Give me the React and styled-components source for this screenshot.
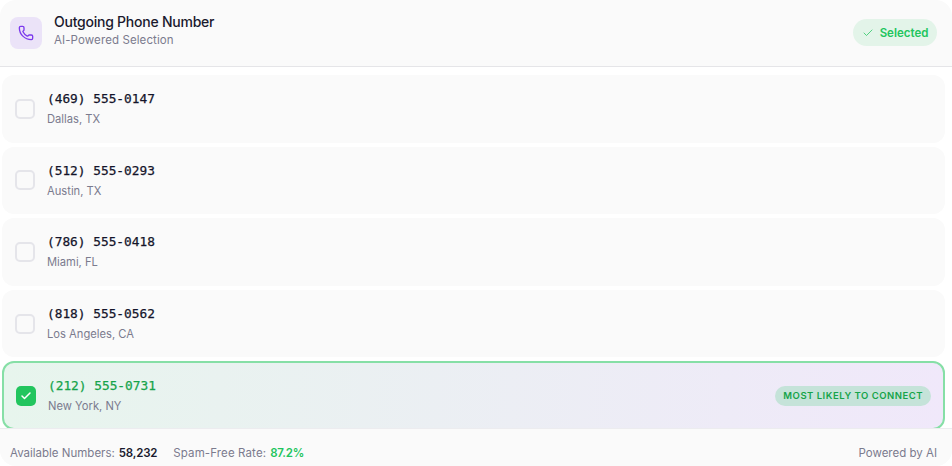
import React from "react";
import styled, { createGlobalStyle } from "styled-components";
import { Phone, Check } from "lucide-react";

const Global = createGlobalStyle`
  html, body { margin: 0; padding: 0; background: #ffffff; }
  * { box-sizing: border-box; }
`;
const Card = styled.div`
  width: 952px; height: 466px; display: flex; flex-direction: column; overflow: hidden;
  background: #fafafa; border-radius: 16px;
  font-family: "Inter", "Noto Sans", sans-serif; color: #1a1a2e;
`;
const Header = styled.header`
  flex: none; height: 67px; display: flex; align-items: center; justify-content: space-between;
  padding: 0 15px 0 10px; border-bottom: 1px solid #e5e5e8;
`;
const TitleGroup = styled.div`display: flex; align-items: center; gap: 12px;`;
const IconBox = styled.div`
  width: 32px; height: 32px; border-radius: 8px; background: #ebe3f8; color: #7c3aed;
  display: flex; align-items: center; justify-content: center;
`;
const Titles = styled.div`display: flex; flex-direction: column; gap: 3px; margin-bottom: 6px;`;
const Title = styled.div`font-size: 14px; font-weight: 500; line-height: 17px; letter-spacing: -0.24px;`;
const Subtitle = styled.div`font-size: 11.5px; line-height: 14px; color: #7b7b8e; letter-spacing: 0.1px;`;
const SelectedPill = styled.div`
  height: 27px; width: 84px; border-radius: 14px; background: #e3f4e9; color: #22c55e; margin-bottom: 1px;
  display: flex; align-items: center; justify-content: center; gap: 6px;
  font-size: 11.5px; font-weight: 600;
`;
const List = styled.div`
  flex: 1; min-height: 0; overflow: hidden; background: #fff; padding: 8px 7px 0 2px;
  display: flex; flex-direction: column; gap: 4px;
`;
const Row = styled.div`
  flex: none; height: ${p => (p.$selected ? "68.6px" : "67.6px")}; border-radius: 12px; display: flex; align-items: center;
  padding: 0 12px 0 ${p => (p.$selected ? "12px" : "13px")};
  background: ${p => (p.$selected ? "linear-gradient(90deg, #e7f5ed 0%, #f0e8fa 100%)" : "#fafafa")};
  border: ${p => (p.$selected ? "2px solid #86dfa6" : "none")};
`;
const Box = styled.div`
  flex: none; width: 20px; height: 20px; border-radius: 5px; margin-right: 12px;
  display: flex; align-items: center; justify-content: center; color: #fff;
  background: ${p => (p.$checked ? "#22c55e" : "transparent")};
  border: ${p => (p.$checked ? "none" : "2px solid #e5e5ea")};
`;
const Info = styled.div`flex: 1; display: flex; flex-direction: column; gap: 5px;`;
const Num = styled.div`
  font-family: "DejaVu Sans Mono", monospace; font-size: 12.8px; line-height: 16px; font-weight: 400;
  -webkit-text-stroke: 0.25px currentColor;
  color: ${p => (p.$selected ? "#16a34a" : "#14142a")};
`;
const City = styled.div`font-size: 11.2px; line-height: 14px; color: #7b7b8e;`;
const Badge = styled.div`
  height: 20px; border-radius: 10px; background: #c5e3d9; color: #16a34a; padding: 0 8px;
  display: flex; align-items: center; font-size: 9.5px; font-weight: 600; letter-spacing: 0.5px;
`;
const Footer = styled.footer`
  flex: none; height: 38px; display: flex; align-items: flex-start; justify-content: space-between;
  padding: 17px 15px 0 10px; border-top: 1px solid #ececef; background: #fafafa;
  font-size: 11.5px; line-height: 14px; color: #7b7b8e;
`;
const Stats = styled.div`display: flex; gap: 16px;`;
const Stat = styled.div`display: flex; gap: 4px;`;
const Label = styled.span`letter-spacing: ${p => p.$wide ? "0.12px" : "0"};`;
const Val = styled.span`font-weight: 600; letter-spacing: -0.2px; color: ${p => p.$green ? "#22c55e" : "#1a1a2e"};`;

const rows = [
  ["(469) 555-0147", "Dallas, TX"],
  ["(512) 555-0293", "Austin, TX"],
  ["(786) 555-0418", "Miami, FL"],
  ["(818) 555-0562", "Los Angeles, CA"],
  ["(212) 555-0731", "New York, NY", true],
];

export default function App() {
  return (
    <Card>
      <Global />
      <Header>
        <TitleGroup>
          <IconBox><Phone size={16} strokeWidth={2} /></IconBox>
          <Titles>
            <Title>Outgoing Phone Number</Title>
            <Subtitle>AI-Powered Selection</Subtitle>
          </Titles>
        </TitleGroup>
        <SelectedPill><Check size={12} strokeWidth={1.5} />Selected</SelectedPill>
      </Header>
      <List>
        {rows.map(([n, c, s]) => (
          <Row key={n} $selected={s}>
            <Box $checked={s}>{s && <Check size={12} strokeWidth={3} />}</Box>
            <Info>
              <Num $selected={s}>{n}</Num>
              <City>{c}</City>
            </Info>
            {s && <Badge>MOST LIKELY TO CONNECT</Badge>}
          </Row>
        ))}
      </List>
      <Footer>
        <Stats>
          <Stat><Label>Available Numbers:</Label><Val>58,232</Val></Stat>
          <Stat><Label $wide>Spam-Free Rate:</Label><Val $green>87.2%</Val></Stat>
        </Stats>
        <span>Powered by AI</span>
      </Footer>
    </Card>
  );
}
